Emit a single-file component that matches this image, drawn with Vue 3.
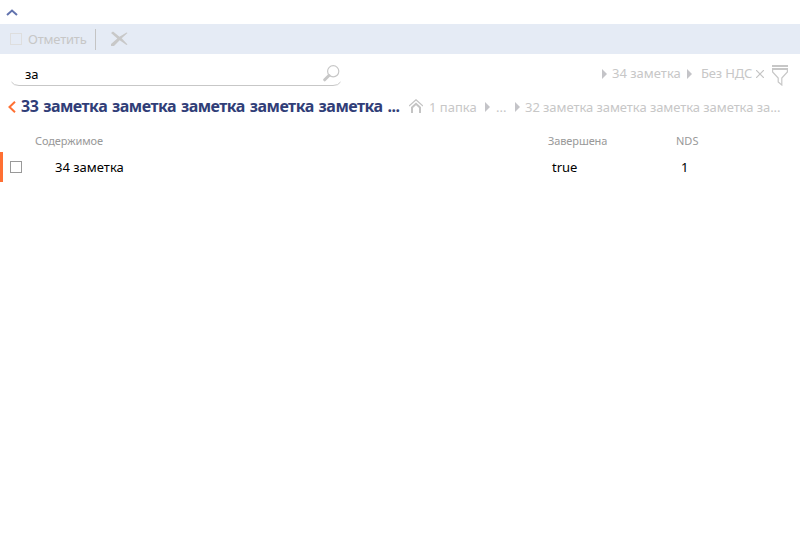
<script setup>
const crumbs = ['1 папка', '...', '32 заметка заметка заметка заметка за...']
const rows = [{ title: '34 заметка', done: 'true', nds: '1' }]
</script>

<template>
  <main class="page">
    <div class="collapse">
      <svg width="12" height="7" viewBox="0 0 12 7"><path d="M1 6L6 1.5L11 6" fill="none" stroke="#6273ae" stroke-width="2" /></svg>
    </div>
    <div class="toolbar">
      <span class="box pale"></span>
      <span class="mark">Отметить</span>
      <span class="divider"></span>
      <svg class="delete" width="18" height="16" viewBox="0 0 18 16"><path d="M0 2L2 .5L8.5 5.8L15.5 1.5L16.5 2L10.7 7.3L16.5 13.5L15.5 14L8.7 9.3L3 15L0 15L0 13L6.3 7.5Z" fill="#c8c8c8" /></svg>
    </div>
    <div class="search-row">
      <div class="search">
        <span class="query">за</span>
        <svg width="17" height="17" viewBox="0 0 17 17"><circle cx="10.2" cy="6.3" r="5.6" fill="none" stroke="#c7c7c7" stroke-width="1.2" /><path d="M6 10.5L1.7 14.8" stroke="#c7c7c7" stroke-width="3" stroke-linecap="round" /></svg>
        <svg class="underline" width="330" height="5" viewBox="0 0 330 5"><path d="M.5 1Q2.5 4.5 8 4.5H322Q327.5 4.5 329.5 1" fill="none" stroke="#c7c7c7" /></svg>
      </div>
      <div class="filter">
        <i class="arrow"></i><span class="f-note">34 заметка</span>
        <i class="arrow"></i><span class="f-nds">Без НДС</span>
        <svg class="clear" width="8" height="8" viewBox="0 0 8 8"><path d="M0 0L8 8M8 0L0 8" stroke="#c4c4c4" stroke-width="1.2" /></svg>
        <svg class="funnel" width="16" height="21" viewBox="0 0 16 21"><path d="M0 0H16V2H0ZM0 3H16V5H0Z" fill="#c7c7c7" /><path d="M.6 5V7L6.2 13V17L9.8 20V13L15.4 7V5" fill="none" stroke="#c7c7c7" stroke-width="1.2" /></svg>
      </div>
    </div>
    <div class="path">
      <svg class="back" width="8" height="12" viewBox="0 0 8 12"><path d="M7 .8L1.5 6L7 11.2" fill="none" stroke="#ff7033" stroke-width="2" /></svg>
      <h1>33 заметка заметка заметка заметка заметка ...</h1>
      <svg class="home" width="14" height="14" viewBox="0 0 14 14"><path d="M0 7L7 .8L14 7" fill="none" stroke="#c4c4c4" stroke-width="1.3" /><path d="M3 14V8.5L7 4.8L11 8.5V14" fill="none" stroke="#c4c4c4" stroke-width="2" /></svg>
      <template v-for="(c, i) in crumbs" :key="i">
        <i v-if="i" class="arrow"></i>
        <span :class="['crumb', 'c' + i]">{{ c }}</span>
      </template>
    </div>
    <div class="grid head">
      <span class="h-title">Содержимое</span><span class="h-done">Завершена</span><span class="h-nds">NDS</span>
    </div>
    <div v-for="r in rows" :key="r.title" class="grid row">
      <span class="title"><i class="box"></i><span class="note">{{ r.title }}</span></span>
      <span class="done">{{ r.done }}</span><span class="nds">{{ r.nds }}</span>
    </div>
  </main>
</template>

<style>
body { background: #fff; }
</style>
<style scoped>
.page { width: 800px; height: 550px; overflow: hidden; font: 13px/20px "Noto Sans", "Open Sans", sans-serif; color: #000; white-space: nowrap; }
svg { display: block; flex: none; }
.collapse { height: 24px; padding: 9px 0 0 6px; box-sizing: border-box; }
.toolbar { height: 30px; background: #e5ebf5; display: flex; align-items: center; padding-left: 10px; color: #c7c7c7; }
.box { width: 12px; height: 12px; box-sizing: border-box; border: 1px solid #999; flex: none; }
.box.pale { border-color: #dedede; }
.mark { width: 67px; margin-left: 6px; letter-spacing: -.2px; }
.divider { width: 1px; height: 21px; background: #c4c4c4; }
.delete { margin-left: 15px; }
.search-row { height: 38px; display: flex; justify-content: space-between; padding: 0 12px 0 10px; }
.search { width: 332px; height: 32px; position: relative; display: flex; justify-content: space-between; padding: 11px 2px 0 15px; box-sizing: border-box; }
.query { line-height: 18px; }
.underline { position: absolute; left: 1px; bottom: 0; }
.filter { display: flex; align-items: center; height: 39px; color: #c7c7c7; }
.filter span { margin-top: -2px; }
.arrow { flex: none; width: 0; height: 0; border: 5px solid transparent; border-left-color: #c4c4c8; border-right: 0; }
.f-note { width: 75px; padding-left: 5px; box-sizing: border-box; margin-right: 5px; }
.f-nds { width: 50px; margin-left: 9px; letter-spacing: -.15px; }
.clear { margin: 0 8px 0 5px; }
.funnel { margin-top: 3px; }
.path { height: 30px; display: flex; align-items: center; padding-left: 8px; color: #c7c7c7; }
h1 { margin: -2px 0 0 5px; width: 388px; font-size: 16px; font-weight: 700; line-height: 24px; letter-spacing: -.5px; word-spacing: 1.2px; color: #313e78; }
.home { margin-top: -3px; }
.crumb { padding-left: 6px; box-sizing: border-box; }
.c0 { width: 62px; }
.c1 { width: 25px; }
.c2 { padding-left: 5px; letter-spacing: -.06px; }
.grid { display: grid; grid-template-columns: 548px 128px 1fr; align-items: center; }
.head { height: 30px; font-size: 11px; color: #999; padding-top: 8px; box-sizing: border-box; }
.h-title { padding-left: 35px; letter-spacing: -.1px; }
.h-done { letter-spacing: -.1px; }
.row { height: 30px; box-shadow: inset 3px 0 #ff7033; }
.title { display: flex; align-items: center; padding-left: 10px; }
.note { margin-left: 33px; }
.done { padding-left: 4px; }
.nds { padding-left: 5px; }
</style>
